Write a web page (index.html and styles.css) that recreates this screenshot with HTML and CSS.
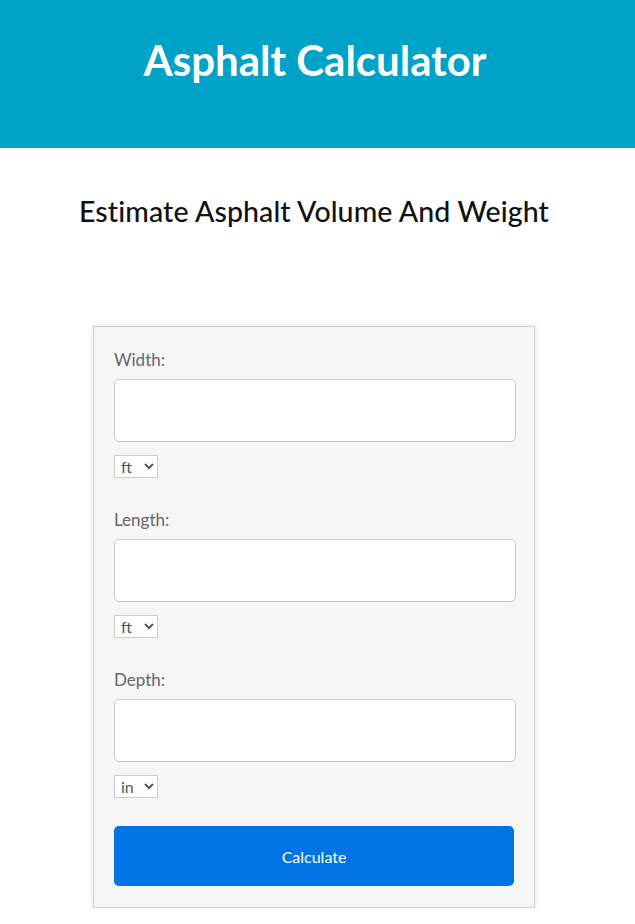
FILE: index.html
```html
<!DOCTYPE html>
<html>
<head>
<meta charset="utf-8">
<link rel="stylesheet" href="styles.css">
</head>
<body>
<header class="hero">
  <h1 class="hero-title">Asphalt Calculator</h1>
</header>
<main class="main">
  <h2 class="subtitle">Estimate Asphalt Volume And Weight</h2>
  <form class="card">
    <div class="group">
      <label class="label">Width:</label>
      <input class="field" type="text">
      <select class="unit"><option>ft</option></select>
    </div>
    <div class="group">
      <label class="label">Length:</label>
      <input class="field" type="text">
      <select class="unit"><option>ft</option></select>
    </div>
    <div class="group last">
      <label class="label">Depth:</label>
      <input class="field" type="text">
      <select class="unit"><option>in</option></select>
    </div>
    <button class="btn" type="button">Calculate</button>
  </form>
</main>
</body>
</html>
```
FILE: styles.css
```css
* { box-sizing: border-box; }
body {
  margin: 0;
  font-family: Lato, "Noto Sans", sans-serif;
  background: #fff;
}
.hero {
  background: #00a2c7;
  height: 148px;
  display: flex;
  justify-content: center;
  padding-top: 34px;
  padding-right: 5px;
}
.hero-title {
  margin: 0;
  color: #fff;
  font-size: 42px;
  font-weight: 700;
  line-height: 52px;
  height: 52px;
  letter-spacing: 0;
}
.main {
  display: flex;
  flex-direction: column;
  align-items: center;
  padding-right: 7px;
}
.subtitle {
  margin: 46px 0 0;
  font-size: 28.5px;
  font-weight: 500;
  color: #111;
  line-height: 34px;
  height: 34px;
  letter-spacing: 0.1px;
}
.card {
  margin-top: 98px;
  width: 442px;
  background: #f6f6f6;
  border: 1px solid #cfcfcf;
  box-shadow: 0 0 6px rgba(0,0,0,0.12);
  padding: 23px 20px 21px;
  display: flex;
  flex-direction: column;
}
.group {
  display: flex;
  flex-direction: column;
  align-items: flex-start;
  margin-bottom: 32px;
}
.group.last { margin-bottom: 28px; }
.label {
  font-size: 17px;
  color: #666;
  line-height: 20px;
  margin-bottom: 9px;
  font-weight: 400;
}
.field {
  width: 402px;
  height: 63px;
  border: 1px solid #c8c8c8;
  border-radius: 5px;
  background: #fff;
}
.unit {
  margin-top: 13px;
  width: 44px;
  height: 23px;
  font-family: Lato, "Noto Sans", sans-serif;
  font-size: 16px;
  color: #555;
  border: 1px solid #ccc;
  background: #fff;
  padding: 0 2px;
}
.btn {
  width: 400px;
  height: 60px;
  border: none;
  border-radius: 5px;
  background: #0073e6;
  color: #fff;
  font-family: Lato, "Noto Sans", sans-serif;
  font-size: 16px;
}
```
